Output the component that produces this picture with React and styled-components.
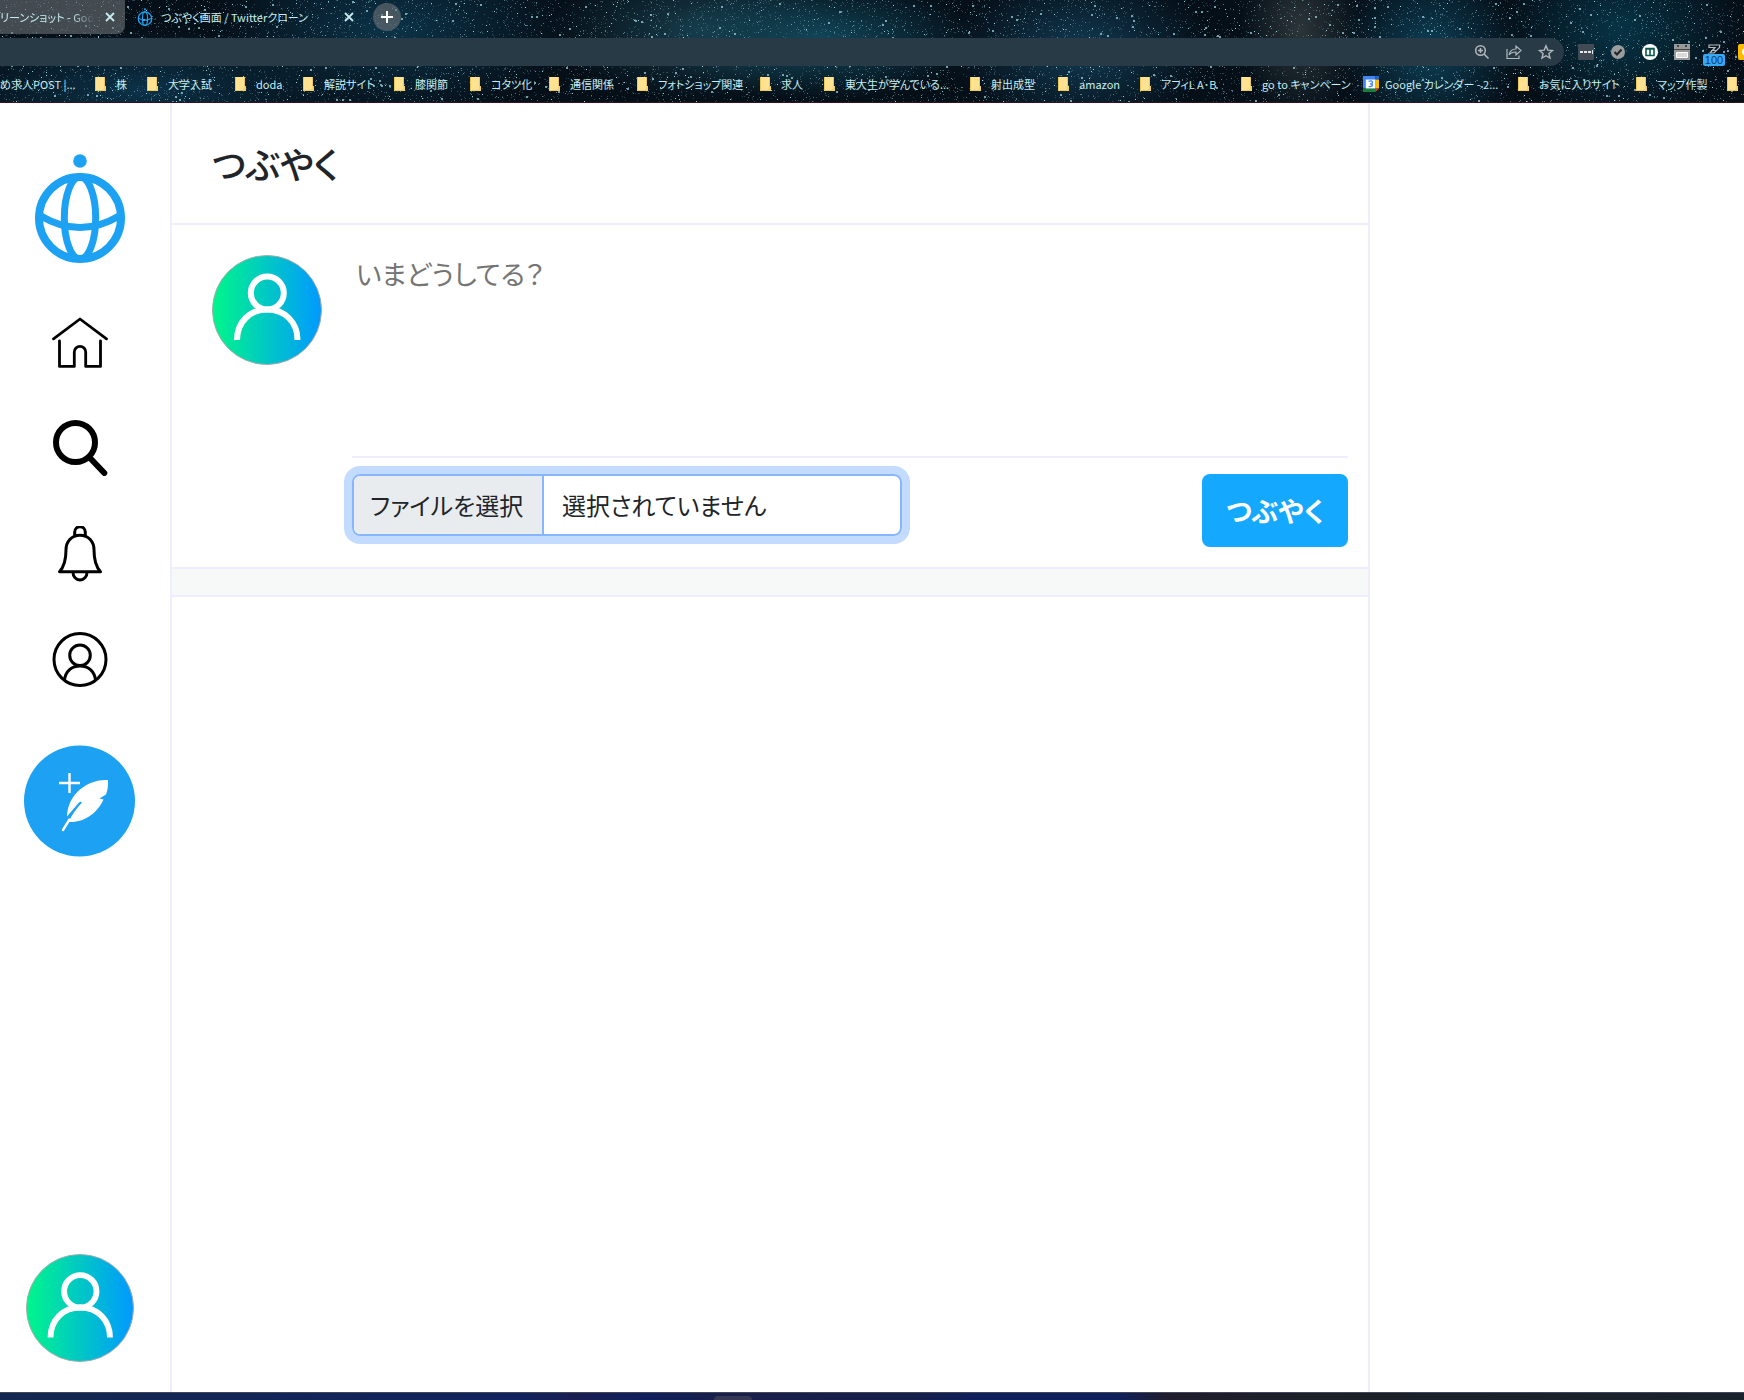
import React from "react";
import styled, { createGlobalStyle } from "styled-components";

const GlobalStyle = createGlobalStyle`
  * { box-sizing: border-box; }
  body {
    margin: 0;
    background: #fff;
    color: #212529;
    font-family: "Noto Sans CJK JP", sans-serif;
    font-feature-settings: "palt";
  }
  button, input, textarea { font: inherit; font-feature-settings: inherit; }
`;

const line = "#eeeeff";
const blue = "#1da1f2";

const Page = styled.div`
  display: flex;
  flex-direction: column;
  min-height: 100vh;
`;

/* ---------- browser frame ---------- */

const Chrome = styled.header`
  position: relative;
  height: 103px;
  overflow: hidden;
  border-bottom: 1px solid #38131f;
  color: #c6edf1;
  font-size: 11px;
  line-height: 20px;
  white-space: nowrap;
  background:
    radial-gradient(ellipse 160px 60px at 820px 40px, #12475a, transparent),
    radial-gradient(ellipse 150px 70px at 700px 30px, #173b48, transparent),
    radial-gradient(ellipse 130px 80px at 1080px 50px, #123a52, transparent),
    radial-gradient(ellipse 90px 90px at 1430px 50px, #0d3f56, transparent),
    radial-gradient(ellipse 60px 90px at 1300px 30px, #2c3539, transparent),
    radial-gradient(ellipse 120px 90px at 1620px 30px, #073345, transparent),
    radial-gradient(ellipse 180px 90px at 390px 30px, #0c3348, transparent),
    radial-gradient(ellipse 200px 60px at 140px 90px, #0c3248, transparent),
    #050f18;
`;

const Stars = styled.svg`
  position: absolute;
  inset: 0;
  width: 100%;
  height: 100%;
`;

const Frame = styled.div`
  position: relative;
  display: flex;
  flex-direction: column;
`;

const TabRow = styled.nav`
  display: flex;
  height: 38px;
`;

const Tab = styled.div`
  display: flex;
  align-items: center;
  gap: 8px;
  width: ${(p) => p.$width}px;
  height: 34px;
  padding: 0 8px 0 ${(p) => (p.$dim ? 0 : 12)}px;
  border-radius: 0 0 8px 0;
  background: ${(p) => (p.$dim ? "rgba(110, 115, 118, 0.6)" : "transparent")};
`;

const TabTitle = styled.span`
  display: flex;
  flex: 1;
  overflow: hidden;
  mask-image: ${(p) => (p.$fade ? "linear-gradient(90deg, #000 75%, transparent)" : "none")};
`;

const PlainButton = styled.button`
  display: grid;
  place-items: center;
  flex: none;
  padding: 0;
  border: 0;
  background: none;
  color: inherit;
  cursor: pointer;
`;

const NewTab = styled(PlainButton)`
  width: 28px;
  height: 28px;
  margin: 3px 0 0 9px;
  border-radius: 50%;
  background: rgba(110, 115, 118, 0.6);
`;

const ToolRow = styled.div`
  display: flex;
  gap: 14px;
  height: 28px;
`;

const AddressBar = styled.div`
  display: flex;
  flex: 1;
  align-items: center;
  justify-content: flex-end;
  gap: 16px;
  padding-right: 10px;
  border-radius: 0 14px 14px 0;
  background: #273a46;
  color: #b3b8bc;
`;

const Extensions = styled.div`
  display: flex;
  align-items: center;
  gap: 16px;
  width: 166px;
`;

const Extension = styled(PlainButton)`
  position: relative;
  width: 16px;
  height: 28px;
`;

const Count = styled.span`
  position: absolute;
  top: 16px;
  left: -3px;
  width: 22px;
  height: 12px;
  border-radius: 2px;
  background: #36a9f4;
  color: #123c5e;
  font-family: "Liberation Sans", sans-serif;
  font-size: 11px;
  line-height: 12px;
`;

const Bookmarks = styled.nav`
  display: flex;
  align-items: center;
  height: 36px;
`;

const Bookmark = styled.a`
  display: flex;
  flex: none;
  align-items: center;
  gap: 6px;
  width: ${(p) => p.$width}px;
  color: inherit;
  text-decoration: none;
`;

/* ---------- application ---------- */

const Body = styled.div`
  display: grid;
  flex: 1;
  grid-template-columns: 172px minmax(0, 1198px) 1fr;
`;

const Sidebar = styled.aside`
  display: flex;
  flex-direction: column;
  align-items: center;
  padding: 50px 10px 30px 0;
  border-right: 2px solid ${line};
`;

const Menu = styled.nav`
  display: flex;
  flex-direction: column;
  align-items: center;
  gap: 50px;
  margin-top: 51px;
`;

const IconLink = styled.a`
  display: block;
  color: #000;
  line-height: 0;
`;

const PostLink = styled(IconLink)`
  margin-top: 57px;
`;

const ProfileLink = styled(IconLink)`
  margin-top: auto;
`;

const Main = styled.main`
  border-right: 2px solid ${line};
`;

const TitleBar = styled.div`
  display: flex;
  align-items: center;
  height: 122px;
  padding: 0 40px;
  border-bottom: 2px solid ${line};
`;

const Title = styled.h1`
  margin: 0;
  font-size: 36px;
  font-weight: 500;
  line-height: 48px;
`;

const Composer = styled.form`
  display: flex;
  gap: 30px;
  padding: 30px 20px 20px 40px;
`;

const Fields = styled.div`
  flex: 1;
  min-width: 0;
`;

const TweetText = styled.textarea`
  display: block;
  width: 100%;
  height: 203px;
  padding: 0 4px;
  border: 0;
  border-bottom: 2px solid ${line};
  outline: 0;
  resize: none;
  font-size: 27px;
  line-height: 38px;
  &::placeholder { color: #757575; opacity: 1; }
`;

const Actions = styled.div`
  display: flex;
  align-items: flex-start;
  justify-content: space-between;
  padding-top: 16px;
`;

const FilePicker = styled.label`
  display: flex;
  width: 550px;
  height: 62px;
  overflow: hidden;
  border: 2px solid #86b7fe;
  border-radius: 8px;
  box-shadow: 0 0 0 8px #c2dbfe;
  font-size: 24px;
  line-height: 58px;
  cursor: pointer;
`;

const FileInput = styled.input`
  position: absolute;
  width: 1px;
  height: 1px;
  opacity: 0;
`;

const FileButton = styled.span`
  width: 190px;
  padding-left: 16px;
  border-right: 2px solid #86b7fe;
  background: #e9ecef;
`;

const FileName = styled.span`
  padding-left: 18px;
`;

const Submit = styled.button`
  width: 146px;
  height: 73px;
  padding: 0;
  border: 0;
  border-radius: 8px;
  background: #15a8ff;
  color: #fff;
  font-size: 27px;
  font-weight: 700;
  cursor: pointer;
`;

const Divider = styled.div`
  height: 30px;
  border: solid ${line};
  border-width: 2px 0;
  background: #f7f9f9;
`;

const Taskbar = styled.footer`
  display: flex;
  height: 8px;
  padding-left: 714px;
  border-top: 1px solid #45485c;
  background: linear-gradient(90deg, #14284f, #12225e 30%, #1a1f52 33%, #10205c 37%, #191f48 42%, #172049 52%, #0f205c 56%, #0f205c 64%, #1f1d2c 67%, #1c2027 75%, #19232c);
`;

const TaskHandle = styled.span`
  width: 38px;
  margin-top: 3px;
  border-radius: 4px 4px 0 0;
  background: #353852;
`;

/* ---------- drawings ---------- */

function starPaths() {
  let seed = 7;
  const rnd = () => {
    seed = (seed * 16807) % 2147483647;
    return seed / 2147483647;
  };
  const layers = [
    { n: 7000, s: 1, o: 0.24 },
    { n: 2600, s: 1, o: 0.5 },
    { n: 600, s: 1, o: 0.95 },
    { n: 260, s: 2, o: 0.7 },
  ];
  return layers.map(({ n, s, o }) => {
    let d = "";
    for (let i = 0; i < n; i++) {
      d += `M${Math.floor(rnd() * 1744)} ${Math.floor(rnd() * 103)}h${s}v${s}h-${s}z`;
    }
    return { d, o };
  });
}
const stars = starPaths();

const Sky = () => (
  <Stars viewBox="0 0 1744 102" preserveAspectRatio="xMidYMid slice" aria-hidden="true">
    {stars.map((s) => (
      <path key={s.o} d={s.d} fill="#9fdcea" opacity={s.o} />
    ))}
  </Stars>
);

const Cross = () => (
  <svg width="14" height="14" viewBox="0 0 14 14" stroke="currentColor" strokeWidth="1.800">
    <path d="M3 3l8 8M11 3l-8 8" />
  </svg>
);

const Globe = ({ width, height }) => (
  <svg width={width} height={height} viewBox="0 0 92 110" fill="none" stroke={blue}>
    <circle cx="46" cy="8" r="6.8" fill={blue} stroke="none" />
    <circle cx="46" cy="65" r="41" strokeWidth="8" />
    <ellipse cx="46" cy="65" rx="15.7" ry="41" strokeWidth="7" />
    <path d="M6 62.5Q46 86.500 86 62.500" strokeWidth="7" />
  </svg>
);

const Folder = () => (
  <svg width="16" height="16" viewBox="0 0 16 16">
    <path d="M1 1h10v14H1z" fill="#ffe391" />
    <path d="M1.500 1v13.500h8M10.500 1v9" fill="none" stroke="#efc65a" />
    <path d="M10 10h2v5h-3v-2h1z" fill="#f6d06c" />
  </svg>
);

const Calendar = () => (
  <svg width="16" height="16" viewBox="0 0 17 18" preserveAspectRatio="none">
    <path fill="#4285f4" d="M0 0h13v14H0z" />
    <path fill="#1967d2" d="M13 0h4v4h-4z" />
    <path fill="#fbbc04" d="M13 4h4v10h-4z" />
    <path fill="#188038" d="M0 14h13v4H0z" />
    <path fill="#ea4335" d="M13 14h4l-4 4z" />
    <path fill="#fff" d="M3 4h10v10H3z" />
    <path fill="none" stroke="#4285f4" strokeWidth="1.500" d="M6 6q4-1.500 4 1T7.500 8.800Q10 9 10 10.500T6 12" />
  </svg>
);

const ZoomIcon = () => (
  <svg width="16" height="16" viewBox="0 0 16 16" fill="none" stroke="currentColor" strokeWidth="1.500">
    <circle cx="6.500" cy="6.500" r="4.800" />
    <path d="M10 10l4.500 4.500M4 6.500h5M6.500 4v5" />
  </svg>
);

const ShareIcon = () => (
  <svg width="16" height="16" viewBox="0 0 16 16" fill="none" stroke="currentColor" strokeWidth="1.200">
    <path d="M1 5v9.500h12v-3M3 11q1-6 7-6V2l5 4.500-5 4.500V8Q5 8 3 11z" />
  </svg>
);

const StarIcon = () => (
  <svg width="16" height="16" viewBox="0 0 16 16" fill="none" stroke="currentColor" strokeWidth="1.400">
    <path d="M8 1.800l1.800 4.300 4.700.4-3.600 3 1.100 4.600L8 11.700l-4 2.400 1.100-4.600-3.600-3 4.700-.4z" />
  </svg>
);

const extensionArt = [
  <g key="dots"><rect width="16" height="16" rx="1" fill="#424b55" /><path d="M2 7h3v2H2zM6 7h3v2H6zM10 7h3v2h-3zM14 6h1v4h-1z" fill="#e4e8eb" /></g>,
  <g key="check"><circle cx="8" cy="8" r="7" fill="#9b9d9f" /><path d="M4.500 8l2.500 2.500L11.500 5.500" fill="none" stroke="#1d2429" strokeWidth="2" /></g>,
  <g key="table"><circle cx="8" cy="8" r="8" fill="#fff" /><path d="M4 4.500h8v7H4zM8 4v8M4 5h8" fill="none" stroke="#0b5a4c" strokeWidth="1.600" /></g>,
  <g key="box"><path d="M0 0h16v16H0z" fill="#97999b" /><path d="M3 1h2v2H3zM11 1h2v2h-2zM0 5h16v1H0z" fill="#444" /><path d="M2.500 8.500h11v5h-11z" fill="#d8d8d8" stroke="#fff" /></g>,
  <path key="seven" d="M3 1h10.500v2.500L8 9H4l5-5.500H3zM5 6.500h6" fill="none" stroke="#b9babb" strokeWidth="1.200" />,
  <g key="yellow"><rect width="16" height="16" rx="2" fill="#ffb900" /><circle cx="8" cy="8" r="4" fill="#fff" /></g>,
];

const HomeIcon = () => (
  <svg width="56" height="56" viewBox="0 0 56 56" fill="none" stroke="currentColor" strokeWidth="2.800" strokeLinecap="round" strokeLinejoin="round">
    <path d="M1.500 24.800L28 5l26.500 19.800" />
    <path d="M7.500 27v25.400H22.300V38a5.700 5.700 0 0 1 11.400 0V52.400H48.500V27" />
  </svg>
);

const SearchIcon = () => (
  <svg width="56" height="56" viewBox="0 0 56 56" fill="none" stroke="currentColor" strokeWidth="6" strokeLinecap="round">
    <circle cx="23.500" cy="22.500" r="19.500" />
    <path d="M38.500 38.500L52.300 53" />
  </svg>
);

const BellIcon = () => (
  <svg width="56" height="56" viewBox="0 0 56 56" fill="none" stroke="currentColor" strokeWidth="3" strokeLinejoin="round">
    <path d="M22.700 10V6a5.300 5.300 0 0 1 10.600 0V10" />
    <path d="M28 9.300c-8.500 0-14 6.500-14 14.500C14 33 12 41 7.500 45.700H48.500C44 41 42 33 42 23.800 42 15.800 36.500 9.300 28 9.300z" />
    <path d="M21 46.500a7 7.500 0 0 0 14 0" />
  </svg>
);

const UserIcon = () => (
  <svg width="56" height="56" viewBox="0 0 56 56" fill="none" stroke="currentColor" strokeWidth="3">
    <circle cx="28" cy="27.500" r="26" />
    <circle cx="28" cy="23.300" r="10.300" />
    <path d="M12.500 48.500C13.300 39 20 34 28 34s14.700 5 15.500 14.500" />
  </svg>
);

const PostIcon = () => (
  <svg width="112" height="112" viewBox="0 0 112 112">
    <circle cx="55.500" cy="56" r="55.500" fill={blue} />
    <path d="M35 38h21M45.500 28v20" stroke="#fff" strokeWidth="2.400" />
    <path d="M84 35C66 33.500 44 47 43 71.500L55 57.500Q57 56 58 57.500C53 63 48 69.500 44.500 77C61 78 74 67 79.500 54.500L75.500 53.500L82 49.500Q84.500 43 84 35z" fill="#fff" />
    <path d="M45.500 74.500L39 85" stroke="#fff" strokeWidth="2.400" strokeLinecap="round" />
  </svg>
);

const Avatar = ({ size, id }) => (
  <svg width={size} height={size} viewBox="0 0 110 110" fill="none">
    <defs>
      <linearGradient id={id}>
        <stop offset="0" stopColor="#00f68a" />
        <stop offset="1" stopColor="#0099ff" />
      </linearGradient>
    </defs>
    <circle cx="55" cy="55" r="54.500" fill={`url(#${id})`} stroke="#a4aaaa" />
    <circle cx="55.300" cy="38" r="16.500" stroke="#fff" strokeWidth="6" />
    <path d="M25 85C25 67 38 54.500 55.300 54.500S85.500 67 85.500 85" stroke="#fff" strokeWidth="6" />
  </svg>
);

/* ---------- content ---------- */

const bookmarks = [
  ["株", 52], ["大学入試", 88], ["doda", 68], ["解説サイト", 91], ["膝関節", 76],
  ["コタツ化", 79], ["通信関係", 88], ["フォトショップ関連", 123], ["求人", 64],
  ["東大生が学んでいる...", 146], ["射出成型", 88], ["amazon", 82], ["アフィL A･B", 101],
  ["go to キャンペーン", 123], ["Google カレンダー - 2...", 154], ["お気に入りサイト", 118],
  ["マップ作製", 91], ["", 22],
];

const menu = [
  ["ホーム", HomeIcon], ["検索", SearchIcon], ["通知", BellIcon], ["プロフィール", UserIcon],
];

export default function App() {
  return (
    <Page>
      <GlobalStyle />
      <Chrome>
        <Sky />
        <Frame>
          <TabRow aria-label="タブ">
            <Tab $width={125} $dim>
              <TabTitle $fade>リーンショット - Goo</TabTitle>
              <PlainButton aria-label="閉じる"><Cross /></PlainButton>
            </Tab>
            <Tab $width={239}>
              <Globe width={16} height={18} />
              <TabTitle>つぶやく画面 / Twitterクローン</TabTitle>
              <PlainButton aria-label="閉じる"><Cross /></PlainButton>
            </Tab>
            <NewTab aria-label="新しいタブ">
              <svg width="14" height="14" viewBox="0 0 14 14" stroke="#fff" strokeWidth="2">
                <path d="M1 7h12M7 1v12" />
              </svg>
            </NewTab>
          </TabRow>
          <ToolRow>
            <AddressBar>
              <PlainButton aria-label="ズーム"><ZoomIcon /></PlainButton>
              <PlainButton aria-label="共有"><ShareIcon /></PlainButton>
              <PlainButton aria-label="ブックマーク"><StarIcon /></PlainButton>
            </AddressBar>
            <Extensions>
              {extensionArt.map((art) => (
                <Extension key={art.key} aria-label="拡張機能">
                  <svg width="16" height="16" viewBox="0 0 16 16">{art}</svg>
                  {art.key === "seven" && <Count>100</Count>}
                </Extension>
              ))}
            </Extensions>
          </ToolRow>
          <Bookmarks aria-label="ブックマーク">
            <Bookmark href="#" $width={94}>め求人POST |...</Bookmark>
            {bookmarks.map(([name, width]) => (
              <Bookmark href="#" key={name} $width={width} aria-label={name || "フォルダ"}>
                {name.startsWith("Google") ? <Calendar /> : <Folder />}
                {name}
              </Bookmark>
            ))}
          </Bookmarks>
        </Frame>
      </Chrome>
      <Body>
        <Sidebar>
          <IconLink href="#" aria-label="トップ"><Globe width={92} height={110} /></IconLink>
          <Menu>
            {menu.map(([name, Icon]) => (
              <IconLink href="#" key={name} aria-label={name}><Icon /></IconLink>
            ))}
          </Menu>
          <PostLink href="#" aria-label="投稿"><PostIcon /></PostLink>
          <ProfileLink href="#" aria-label="アカウント"><Avatar size={108} id="avatar-side" /></ProfileLink>
        </Sidebar>
        <Main>
          <TitleBar><Title>つぶやく</Title></TitleBar>
          <Composer onSubmit={(e) => e.preventDefault()}>
            <Avatar size={110} id="avatar-main" />
            <Fields>
              <TweetText aria-label="つぶやき" placeholder="いまどうしてる？" />
              <Actions>
                <FilePicker>
                  <FileInput type="file" />
                  <FileButton>ファイルを選択</FileButton>
                  <FileName>選択されていません</FileName>
                </FilePicker>
                <Submit type="submit">つぶやく</Submit>
              </Actions>
            </Fields>
          </Composer>
          <Divider />
        </Main>
      </Body>
      <Taskbar><TaskHandle /></Taskbar>
    </Page>
  );
}
